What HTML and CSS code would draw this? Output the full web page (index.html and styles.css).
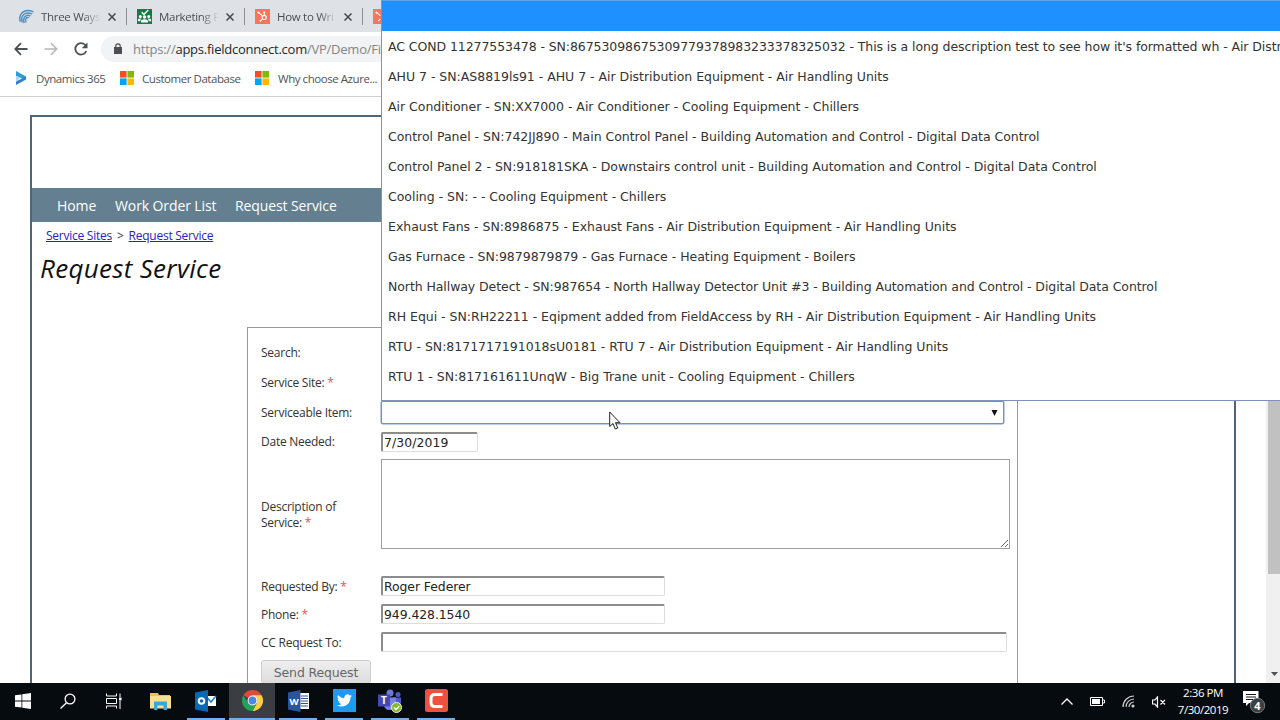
FILE: index.html
```
<!DOCTYPE html>
<html lang="en">
<head>
    <meta charset="UTF-8">
    <meta name="viewport" content="width=device-width, initial-scale=1.0">
    <title>Request Service</title>
    <link rel="stylesheet" href="styles.css">
</head>
<body>
<div class="desktop">
    <div class="browser">
        <div class="tabs">
            <div class="tab">
                <svg class="favicon" viewBox="0 0 16 16" fill="none" stroke="#4a8fc0" stroke-width="1.5"><path d="M1.500 13.500C-1.500 5 6-1 15.500 3"/><path d="M3.500 14.500C1 7 7 2 14 5.500"/><path d="M5.500 15C3.500 9 8 5 12 7.500"/><path d="M7.500 14.500C6 11 8 8 10.500 9.500"/></svg>
                <span class="tab-title">Three Ways</span>
                <svg class="close" viewBox="0 0 8 8" stroke="#45484c" stroke-width="1.5"><path d="M.5.5l7 7M7.500.5l-7 7"/></svg>
            </div>
            <div class="tab">
                <svg class="favicon" viewBox="0 0 16 16"><path fill="#197b43" d="M0 0h16v16H0z"/><path d="M5 3.500l2.300 2.300L12 1" fill="none" stroke="#fff" stroke-width="1.500"/><g fill="#fff"><circle cx="3.500" cy="8" r="1.600"/><circle cx="8" cy="8.500" r="1.900"/><circle cx="12.500" cy="8" r="1.600"/><path d="M1 13v-1.500q0-1.500 2.500-1.500l1 .5Q3.500 11.500 3.500 13zM15 13v-1.500q0-1.500-2.500-1.500l-1 .5q1 1 1 2.500zM4.300 14.500V13q0-2 3.700-2t3.700 2v1.500z"/></g></svg>
                <span class="tab-title">Marketing P</span>
                <svg class="close" viewBox="0 0 8 8" stroke="#45484c" stroke-width="1.5"><path d="M.5.5l7 7M7.500.5l-7 7"/></svg>
            </div>
            <div class="tab">
                <svg class="favicon" viewBox="0 0 16 16"><path fill="#f8745a" d="M0 0h16v16H0z"/><g fill="none" stroke="#fff" stroke-width="1.200"><circle cx="9.800" cy="9" r="2.200"/><path d="M3.500 3.500L8 7.300M9.800 6.800V4M8 10.500L5.500 13"/></g><g fill="#fff"><circle cx="3.500" cy="3.700" r="1.100"/><circle cx="9.800" cy="3.500" r="1.100"/><circle cx="5.500" cy="12.800" r=".8"/></g></svg>
                <span class="tab-title">How to Wri</span>
                <svg class="close" viewBox="0 0 8 8" stroke="#45484c" stroke-width="1.5"><path d="M.5.5l7 7M7.500.5l-7 7"/></svg>
            </div>
            <div class="tab">
                <svg class="favicon" viewBox="0 0 16 16"><path fill="#f8745a" d="M0 0h16v16H0z"/><path d="M3.500 3.500L8 7.300M8 10.500L5.500 13" stroke="#fff" stroke-width="1.200"/><circle cx="3.500" cy="3.700" r="1.100" fill="#fff"/></svg>
            </div>
        </div>

        <div class="toolbar">
            <svg class="back" width="14" height="14" viewBox="0 0 14 14" fill="none" stroke="#4c4f53" stroke-width="1.800"><path d="M13.500 7H1.500M7 1.200L1.300 7 7 12.800"/></svg>
            <svg class="forward" width="14" height="14" viewBox="0 0 14 14" fill="none" stroke="#b5b7ba" stroke-width="1.600"><path d="M.5 7h12M7 1.200L12.700 7 7 12.800"/></svg>
            <svg class="reload" width="14" height="14" viewBox="0 0 14 14"><path d="M12.300 9A5.700 5.700 0 1 1 11.500 3.300" fill="none" stroke="#4c4f53" stroke-width="1.800"/><path d="M13.500.5v5.700H7.800z" fill="#4c4f53"/></svg>
            <div class="address">
                <svg width="8" height="11" viewBox="0 0 8 11"><path d="M0 4h8v7H0z" fill="#4c4f53"/><path d="M1.800 5V3a2.200 2.200 0 0 1 4.400 0v2" fill="none" stroke="#4c4f53" stroke-width="1.200"/></svg>
                <span class="url">https://<b>apps.fieldconnect.com</b>/VP/Demo/Fi</span>
            </div>
        </div>

        <div class="bookmarks">
            <div class="bookmark dynamics">
                <svg width="10" height="14" viewBox="0 0 10 14"><path d="M0 0l10 5.500-2.500 2.800L0 4.800z" fill="#2e9bdc"/><path d="M0 14l10-5.500V5.500L0 10.500z" fill="#2e7fd0"/><path d="M0 5l4 2-4 4z" fill="#a9d6f2"/></svg>
                <span>Dynamics 365</span>
            </div>
            <div class="bookmark database">
                <svg width="14" height="14" viewBox="0 0 14 14"><path fill="#f25022" d="M0 0h6.600v6.600H0z"/><path fill="#7fba00" d="M7.400 0H14v6.600H7.400z"/><path fill="#00a4ef" d="M0 7.400h6.600V14H0z"/><path fill="#ffb900" d="M7.400 7.400H14V14H7.400z"/></svg>
                <span>Customer Database</span>
            </div>
            <div class="bookmark azure">
                <svg width="14" height="14" viewBox="0 0 14 14"><path fill="#f25022" d="M0 0h6.600v6.600H0z"/><path fill="#7fba00" d="M7.400 0H14v6.600H7.400z"/><path fill="#00a4ef" d="M0 7.400h6.600V14H0z"/><path fill="#ffb900" d="M7.400 7.400H14V14H7.400z"/></svg>
                <span>Why choose Azure...</span>
            </div>
        </div>

        <div class="viewport">
            <div class="page">
                <div class="site">
                    <div class="banner"></div>
                    <nav class="menu">
                        <span class="m-home">Home</span>
                        <span class="m-orders">Work Order List</span>
                        <span class="m-request">Request Service</span>
                    </nav>
                    <div class="breadcrumb"><a href="#">Service Sites</a><span>&gt;</span><a href="#">Request Service</a></div>
                    <h1>Request Service</h1>

                    <form class="request-form">
                        <label>Search:</label>
                        <span></span>
                        <label>Service Site: <i>*</i></label>
                        <span></span>
                        <label>Serviceable Item:</label>
                        <div class="select"><svg width="7" height="6" viewBox="0 0 7 6"><path d="M.5 0h6L3.500 6z" fill="#111"/></svg></div>
                        <label>Date Needed:</label>
                        <input class="date" type="text" value="7/30/2019">
                        <label class="lower">Description of<br>Service: <i>*</i></label>
                        <textarea></textarea>
                        <label class="lower">Requested By: <i>*</i></label>
                        <input class="medium" type="text" value="Roger Federer">
                        <label class="lower">Phone: <i>*</i></label>
                        <input class="medium" type="text" value="949.428.1540">
                        <label class="lower">CC Request To:</label>
                        <input class="long" type="text">
                        <button type="button">Send Request</button>
                    </form>
                </div>
            </div>
            <div class="scrollbar">
                <div class="thumb"></div>
                <svg width="7" height="4" viewBox="0 0 7 4"><path d="M0 0h7L3.500 4z" fill="#505050"/></svg>
            </div>
        </div>
    </div>

    <div class="taskbar">
        <div class="app"><svg width="16" height="16" viewBox="0 0 16 16" fill="#fff"><path d="M0 2.300L6.500 1.400v6.200H0zM7.300 1.300L16 0v7.600H7.300zM0 8.400h6.500v6.200L0 13.700zM7.300 8.400H16V16l-8.700-1.300z"/></svg></div>
        <div class="app"><svg width="16" height="16" viewBox="0 0 16 16" fill="none" stroke="#fff" stroke-width="1.300"><circle cx="10" cy="6" r="4.900"/><path d="M6.500 9.700L.5 15.500"/></svg></div>
        <div class="app"><svg width="16" height="16" viewBox="0 0 16 16" fill="none" stroke="#fff"><path d="M.5.500v2.500h10V.5M.5 15.500V13h10v2.500M.5 5.500h10v5H.5zM14 .5V4M14 8v8"/><path d="M13 4.500h2.500v3H13z" fill="#fff" stroke="none"/></svg></div>
        <div class="app"><svg width="21" height="18" viewBox="0 0 21 18"><path fill="#e8c35a" d="M0 1h8l1 2h11v5H0z"/><path fill="#fbe08f" d="M0 4h21v12.500H0z"/><path fill="#35a8dc" d="M4 9.500h13V18h-3.500v-4.500h-6V18H4z"/></svg></div>
        <div class="app open"><svg width="22" height="22" viewBox="0 0 22 22"><path fill="#fff" d="M11 6h10v10H11z"/><path d="M12 7.500l4 4.500 5-6" fill="none" stroke="#1b82cf" stroke-width="1.500"/><path fill="#0768b5" d="M0 2.500L13 0v22L0 19.500z"/><circle cx="6.500" cy="11" r="2.800" fill="none" stroke="#fff" stroke-width="2"/></svg></div>
        <div class="app open active"><svg width="21" height="21" viewBox="0 0 42 42"><path fill="#de4a3c" d="M21 21L2.800 10.500A21 21 0 0 1 39.200 10.500z"/><path fill="#fdcd45" d="M21 21V10.500h18.200A21 21 0 0 1 21 42l9-16z"/><path fill="#21a35a" d="M2.800 10.500A21 21 0 0 0 21 42l9-16-18 0z"/><circle cx="21" cy="21" r="10" fill="#f1f1f1"/><circle cx="21" cy="21" r="7.800" fill="#4a89e8"/></svg></div>
        <div class="app open"><svg width="21" height="22" viewBox="0 0 21 22"><path fill="#fff" d="M10 3h11v16H10z"/><path d="M13 6h7M13 8.500h7M13 11h7M13 13.500h7M13 16h7" stroke="#2a5699"/><path fill="#2a5699" d="M0 2.500L12.500 0v22L0 19.500z"/><text class="letter" x="6.200" y="14.500" font-size="9.500" text-anchor="middle">W</text></svg></div>
        <div class="app open"><svg width="23" height="23" viewBox="0 0 23 23"><path fill="#1d9bf0" d="M0 0h23v23H0z"/><path fill="#fff" transform="translate(4 4) scale(.625)" d="M23.950 4.570a10 10 0 0 1-2.820.77 4.960 4.960 0 0 0 2.160-2.720 9.900 9.900 0 0 1-3.120 1.180 4.920 4.920 0 0 0-8.380 4.480C7.690 8.090 4.070 6.130 1.640 3.160a4.920 4.920 0 0 0 1.520 6.570 4.900 4.900 0 0 1-2.230-.61v.06a4.920 4.920 0 0 0 3.950 4.830 5 5 0 0 1-2.210.08 4.940 4.940 0 0 0 4.600 3.420A9.870 9.870 0 0 1 0 19.540a14 14 0 0 0 7.550 2.210c9.050 0 14-7.500 14-13.980 0-.21 0-.42-.02-.63a9.900 9.900 0 0 0 2.420-2.570z"/></svg></div>
        <div class="app open"><svg width="24" height="24" viewBox="0 0 24 24"><circle cx="12" cy="4" r="3.500" fill="#6f79d8"/><circle cx="20" cy="5.500" r="2.500" fill="#5059c9"/><path fill="#5059c9" d="M15 8.500h8V14q0 4-4 4h-4z"/><path fill="#7b83eb" d="M6 8.500h12V15q0 6-6 6t-6-6z"/><path fill="#4349ae" d="M0 5.500h12v12H0z"/><text class="letter" x="6" y="15" font-size="10" text-anchor="middle">T</text><circle cx="18.500" cy="18.500" r="5" fill="#83b92b" stroke="#eef5df"/><path d="M16 18.500l2 2 3.300-3.500" fill="none" stroke="#fff" stroke-width="1.400"/></svg></div>
        <div class="app open"><svg width="23" height="23" viewBox="0 0 23 23"><rect width="23" height="23" rx="2.500" fill="#f0513f"/><path d="M17.500 5.500h-7.500q-4 0-4 4v4q0 4 4 4h7.500" fill="none" stroke="#fff" stroke-width="3"/></svg></div>

        <div class="tray">
            <svg width="12" height="7" viewBox="0 0 12 7" fill="none" stroke="#fff" stroke-width="1.300"><path d="M.5 6.500L6 1l5.500 5.500"/></svg>
            <svg width="15" height="9" viewBox="0 0 15 9"><path d="M.5.5h12v8H.5zM13 3h1.500v3H13" fill="none" stroke="#fff"/><path d="M2 2h8v5H2z" fill="#fff"/></svg>
            <svg width="13" height="13" viewBox="0 0 13 13" fill="none" stroke="#ccc" stroke-width="1.200"><path d="M1 12A11 11 0 0 1 12 1"/><path d="M4 12A8 8 0 0 1 12 4"/><path d="M7 12a5 5 0 0 1 5-5"/><circle cx="11" cy="11" r="1" fill="#fff"/></svg>
            <svg width="14" height="12" viewBox="0 0 14 12" fill="none" stroke="#fff" stroke-width="1.200"><path d="M.5 4v4H3l2.500 3V1L3 4zM8.500 4l4.500 4.500M13 4L8.500 8.500"/></svg>
        </div>
        <div class="clock">2:36 PM<br>7/30/2019</div>
        <div class="notices">
            <svg width="23" height="24" viewBox="0 0 23 24"><path fill="#fff" d="M0 1h15.500v12H6l-3 3v-3H0z"/><path d="M3 4.500h10M3 7h10M3 9.500h7" stroke="#10151a"/><circle cx="14.500" cy="15.500" r="7.200" fill="#3b4044" stroke="#777b7e"/><text class="letter" x="14.500" y="19.500" font-size="11" text-anchor="middle">4</text></svg>
        </div>
    </div>

    <ul class="options">
        <li class="selected"></li>
        <li class="tight">AC COND 11277553478 - SN:86753098675309779378983233378325032 - This is a long description test to see how it's formatted wh - Air Distr</li>
        <li>AHU 7 - SN:AS8819ls91 - AHU 7 - Air Distribution Equipment - Air Handling Units</li>
        <li>Air Conditioner - SN:XX7000 - Air Conditioner - Cooling Equipment - Chillers</li>
        <li>Control Panel - SN:742JJ890 - Main Control Panel - Building Automation and Control - Digital Data Control</li>
        <li>Control Panel 2 - SN:918181SKA - Downstairs control unit - Building Automation and Control - Digital Data Control</li>
        <li>Cooling - SN: - - Cooling Equipment - Chillers</li>
        <li>Exhaust Fans - SN:8986875 - Exhaust Fans - Air Distribution Equipment - Air Handling Units</li>
        <li>Gas Furnace - SN:9879879879 - Gas Furnace - Heating Equipment - Boilers</li>
        <li class="tight">North Hallway Detect - SN:987654 - North Hallway Detector Unit #3 - Building Automation and Control - Digital Data Control</li>
        <li>RH Equi - SN:RH22211 - Eqipment added from FieldAccess by RH - Air Distribution Equipment - Air Handling Units</li>
        <li>RTU - SN:8171717191018sU0181 - RTU 7 - Air Distribution Equipment - Air Handling Units</li>
        <li>RTU 1 - SN:817161611UnqW - Big Trane unit - Cooling Equipment - Chillers</li>
    </ul>

    <svg class="cursor" width="12" height="19" viewBox="0 0 12 19"><path d="M.7 1v14.500l3.300-3 2.300 5.500 2.500-1-2.300-5.300H11z" fill="#fff" stroke="#222"/></svg>
</div>
</body>
</html>
```
FILE: styles.css
```
* {
    box-sizing: border-box;
}
body {
    margin: 0;
    font-family: 'Open Sans', sans-serif;
    font-size: 12px;
    color: #333;
}
svg {
    flex: none;
    display: block;
}
.desktop {
    position: relative;
    display: flex;
    flex-direction: column;
    width: 1280px;
    height: 720px;
    overflow: hidden;
}
.browser {
    height: 683px;
    display: flex;
    flex-direction: column;
    background: #fff;
}

/* tab strip */
.tabs {
    display: flex;
    height: 32px;
    background: #dee1e6;
    padding-left: 9px;
}
.tab {
    display: flex;
    align-items: center;
    width: 118px;
    margin: 8px 0 7px;
    padding-left: 10px;
    border-right: 1px solid #8b8e93;
}
.tab:last-child {
    border: 0;
}
.favicon {
    width: 15px;
    height: 15px;
}
.tab-title {
    width: 60px;
    margin: 0 7px;
    white-space: nowrap;
    font-size: 11.5px;
    letter-spacing: -.3px;
    color: #4b4e52;
    -webkit-mask-image: linear-gradient(90deg, #000 70%, transparent);
    mask-image: linear-gradient(90deg, #000 70%, transparent);
}
.close {
    width: 8px;
    height: 8px;
}

.toolbar {
    display: flex;
    align-items: center;
    height: 34px;
    padding: 0 0 1px 14px;
}
.forward {
    margin-left: 16px;
}
.reload {
    margin: 0 13px 0 16px;
}
.address {
    display: flex;
    align-items: center;
    flex: 1;
    height: 26px;
    padding-left: 13px;
    border-radius: 13px 0 0 13px;
    background: #f1f3f4;
}
.url {
    margin-left: 11px;
    font-size: 13px;
    letter-spacing: -.24px;
    color: #80868b;
    white-space: nowrap;
}
.url b {
    font-weight: 400;
    color: #25282b;
}

.bookmarks {
    display: flex;
    height: 31px;
    padding: 0 0 6px 16px;
    border-bottom: 1px solid #cfd1d4;
    font-size: 11.5px;
    letter-spacing: -.45px;
    color: #505357;
}
.bookmark {
    display: flex;
    align-items: center;
    white-space: nowrap;
}
.dynamics {
    width: 104px;
    gap: 10px;
}
.database {
    width: 135px;
    gap: 8px;
}
.azure {
    gap: 9px;
}

/* web page */
.viewport {
    display: flex;
    flex: 1;
    overflow: hidden;
}
.page {
    flex: 1;
    padding: 18px 30px 0;
}
.site {
    height: 700px;
    border: 2px solid #506577;
}
.banner {
    height: 71px;
}
.menu {
    display: flex;
    align-items: center;
    height: 34px;
    padding-left: 25px;
    background: #637f90;
    color: #fff;
    font-size: 14px;
    letter-spacing: -.1px;
}
.m-home {
    width: 58px;
}
.m-orders {
    width: 120px;
}
.breadcrumb {
    display: flex;
    gap: 5px;
    padding: 5px 0 0 14px;
    line-height: 17px;
    letter-spacing: -.25px;
}
.breadcrumb a {
    color: #2a22c4;
}
h1 {
    margin: 6px 0 0 8px;
    font-size: 26px;
    font-weight: 400;
    font-style: italic;
    line-height: 36px;
    letter-spacing: .3px;
    color: #111;
}
.request-form {
    display: grid;
    grid-template-columns: 120px 1fr;
    grid-template-rows: 30px 30px 29px 29px 116px 28px 28px 28px 29px;
    align-items: center;
    align-content: start;
    width: 771px;
    height: 420px;
    margin: 41px 0 0 215px;
    padding: 10px 0 0 13px;
    border: 1px solid #999;
}
label {
    line-height: 16px;
    letter-spacing: -.25px;
}
label i {
    font-style: normal;
    color: #e05560;
}
.lower {
    padding-top: 2px;
}
.request-form input,
.request-form textarea,
.select {
    margin: 0;
    border: 1px solid #a0a0a0;
    background: #fff;
}
.request-form input {
    height: 20px;
    padding: 0 1px;
    border: 2px solid;
    border-width: 2px 1px 1px 2px;
    border-color: #8c8c8c #ddd #ddd #8c8c8c;
    border-radius: 2px;
    font: 12.4px 'DejaVu Sans', sans-serif;
    letter-spacing: -.05px;
    color: #222;
}
.request-form .date {
    width: 97px;
    letter-spacing: .1px;
}
.request-form .medium {
    width: 284px;
}
.request-form .long {
    width: 626px;
}
.request-form textarea {
    width: 629px;
    height: 90px;
    margin-top: 3px;
    align-self: start;
}
.select {
    display: flex;
    align-items: center;
    justify-content: flex-end;
    width: 623px;
    height: 23px;
    padding-right: 5px;
    border: 1px solid #6f93c8;
    box-shadow: 0 0 0 .5px #7a9cd0;
    border-radius: 2px;
}
button {
    width: 110px;
    height: 24px;
    padding: 0;
    align-self: end;
    border: 1px solid #ccc;
    border-radius: 3px;
    background: linear-gradient(#eee, #ddd);
    font: 12.5px 'DejaVu Sans', sans-serif;
    letter-spacing: -.15px;
    color: #666;
}
.request-form button {
    margin-bottom: 1px;
}
.scrollbar {
    display: flex;
    flex-direction: column;
    align-items: center;
    justify-content: space-between;
    width: 14px;
    padding: 15px 0 7px 2px;
    background: #f0f0f0;
}
.thumb {
    width: 12px;
    height: 462px;
    background: #c1c1c1;
}

/* open dropdown list, lies over the browser */
.options {
    position: absolute;
    top: 0;
    left: 381px;
    width: 960px;
    height: 401px;
    margin: 0;
    padding: 0;
    list-style: none;
    background: #fff;
    border: 1px solid #7b93bd;
    border-top-color: #5aa5f0;
}
.options li {
    height: 30px;
    padding-left: 6px;
    font: 12.5px/32px 'DejaVu Sans', sans-serif;
    letter-spacing: -.02px;
    white-space: nowrap;
}
.options .tight {
    letter-spacing: -.08px;
}
.options .selected {
    background: #1e90ff;
}
.cursor {
    position: absolute;
    left: 609px;
    top: 411px;
}

.taskbar {
    display: flex;
    height: 37px;
    background: #060b10;
    color: #fff;
}
.app {
    display: flex;
    align-items: center;
    justify-content: center;
    width: 46px;
    border-bottom: 2px solid transparent;
    background-clip: padding-box;
}
.app:first-child {
    width: 45px;
}
.open {
    width: 38px;
    margin: 0 4px;
    border-color: #76aee4;
}
.active {
    width: 46px;
    margin: 0;
    background: #3a3d41;
}
.letter {
    fill: #fff;
    font-family: 'Open Sans', sans-serif;
    font-weight: 700;
}
.tray {
    display: flex;
    align-items: center;
    gap: 17px;
    margin-left: auto;
}
.clock {
    width: 74px;
    margin-right: 3px;
    padding-top: 1px;
    text-align: center;
    font-size: 11.5px;
    line-height: 17px;
    letter-spacing: -.45px;
}
.notices {
    display: flex;
    align-items: center;
    width: 37px;
}
```
